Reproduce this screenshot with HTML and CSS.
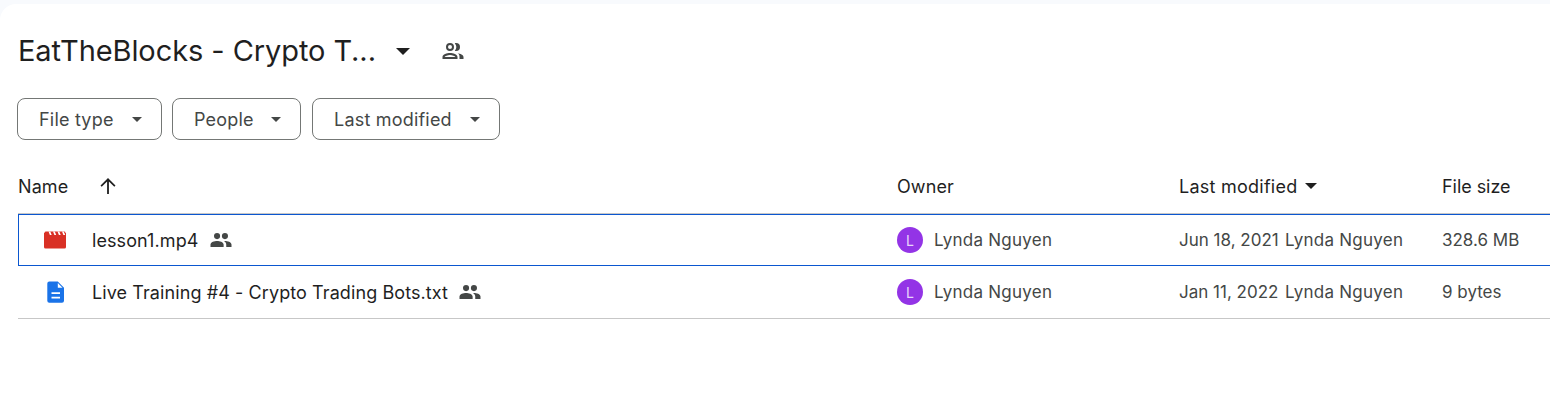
FILE: index.html
```html
<!DOCTYPE html>
<html lang="en">
<head>
<meta charset="utf-8">
<title>EatTheBlocks - Crypto Trading</title>
<link rel="stylesheet" href="styles.css">
</head>
<body>
<main class="card">
  <header class="title-row">
    <h1 class="title">EatTheBlocks - Crypto T...</h1>
    <svg class="title-caret" viewBox="0 0 14 7"><path d="M0 0h14L7 7z"/></svg>
    <svg class="title-people" viewBox="0 0 24 24"><path d="M9 12a4 4 0 1 0 0-8 4 4 0 0 0 0 8zm0-6a2 2 0 1 1 0 4 2 2 0 0 1 0-4zm0 8c-3 0-7.500 1.300-7.500 4v2h15v-2c0-2.700-4.500-4-7.500-4zM3.600 18c.5-.9 3-2 5.400-2s4.900 1.100 5.400 2H3.600zM15 12a4 4 0 0 0 0-8c-.4 0-.8.100-1.200.2a6 6 0 0 1 0 7.600c.4.100.8.200 1.200.2zm1.700 2.300c1.700.9 1.800 2.200 1.800 3.700v2h4v-2c0-2.200-3.300-3.300-5.800-3.700z"/></svg>
  </header>

  <div class="chips">
    <button class="chip chip-type">File type<svg class="chip-caret" viewBox="0 0 10 5"><path d="M0 0h10L5 5z"/></svg></button>
    <button class="chip chip-people">People<svg class="chip-caret" viewBox="0 0 10 5"><path d="M0 0h10L5 5z"/></svg></button>
    <button class="chip chip-mod">Last modified<svg class="chip-caret" viewBox="0 0 10 5"><path d="M0 0h10L5 5z"/></svg></button>
  </div>

  <section class="table">
    <div class="row head">
      <div class="c-name"><span>Name</span>
        <svg class="sort-arrow" viewBox="0 0 16 16"><path d="M8 0 .5 7.500l1.200 1.200L7.100 3.400V16h1.800V3.400l5.400 5.300 1.200-1.200z"/></svg>
      </div>
      <div class="c-owner">Owner</div>
      <div class="c-mod"><span class="head-mod">Last modified</span><svg class="head-caret" viewBox="0 0 10 5"><path d="M0 0h10L5 5z"/></svg></div>
      <div class="c-size head-size">File size</div>
    </div>

    <div class="row item selected">
      <div class="c-name">
        <span class="file-icon"><svg viewBox="0 0 22 18" width="22" height="18"><path fill="#d93025" d="M1.500.5h19A1.500 1.500 0 0 1 22 2v14a1.500 1.500 0 0 1-1.500 1.500h-19A1.500 1.500 0 0 1 0 16V2A1.500 1.500 0 0 1 1.500.5z"/><path fill="#fff" d="M0 .5h1.500L0 2zM20.500.5H22V2zM4.500.5h1.800l1.400 3.400H5.900zM9 .5h1.800l1.400 3.400h-1.800zM13.500.5h1.800l1.400 3.400h-1.800zM18 .5h1.800l1.400 3.400h-1.800z"/></svg></span>
        <span class="fname">lesson1.mp4</span>
        <svg class="shared" viewBox="0 0 24 16"><use href="#shared-glyph"/></svg>
      </div>
      <div class="c-owner"><span class="avatar">L</span><span class="person">Lynda Nguyen</span></div>
      <div class="c-mod"><span class="date">Jun 18, 2021</span><span class="person">Lynda Nguyen</span></div>
      <div class="c-size">328.6 MB</div>
    </div>

    <div class="row item">
      <div class="c-name">
        <span class="file-icon"><svg viewBox="0 0 18 22" width="18" height="22"><path fill="#1a73e8" d="M2.300.5h8.500L17 6.700v13a2 2 0 0 1-2 2H2.300a2 2 0 0 1-2-2v-17.200a2 2 0 0 1 2-2z"/><path fill="#fff" d="M10.800 2 15.500 6.700h-4.700z"/><path fill="#fff" d="M4.500 11.200H13v1.800H4.500zM4.500 15.700H13v1.800H4.500z"/></svg></span>
        <span class="fname">Live Training #4 - Crypto Trading Bots.txt</span>
        <svg class="shared" viewBox="0 0 24 16"><use href="#shared-glyph"/></svg>
      </div>
      <div class="c-owner"><span class="avatar">L</span><span class="person">Lynda Nguyen</span></div>
      <div class="c-mod"><span class="date">Jan 11, 2022</span><span class="person">Lynda Nguyen</span></div>
      <div class="c-size">9 bytes</div>
    </div>
  </section>
</main>
<svg class="defs" aria-hidden="true"><defs><path id="shared-glyph" d="M16.500 7a3.500 3.500 0 1 0 0-7 3.500 3.500 0 0 0 0 7zm-9 0a3.500 3.500 0 1 0 0-7 3.500 3.500 0 0 0 0 7zm0 2C4.700 9 0 10.300 0 13v3h15v-3c0-2.700-4.700-4-7.500-4zm9 0h-1.100c1.500 1 2.600 2.300 2.600 4v3h6v-3c0-2.700-4.700-4-7.500-4z"/></defs></svg>
</body>
</html>
```
FILE: styles.css
```css
* { box-sizing: border-box; }
html, body { margin: 0; height: 100%; }
body {
  background: #f8fafd;
  padding-top: 4px;
  overflow: hidden;
  font-family: "Inter", "Open Sans", sans-serif;
  color: #1f1f1f;
}
.card {
  background: #fff;
  height: 411px;
  border-top-left-radius: 16px;
  padding: 0 0 0 18px;
}
.title-row {
  display: flex;
  align-items: center;
  padding-top: 32px;
  box-sizing: content-box;
  height: 30px;
}
.title {
  margin: 0;
  font-size: 29px;
  font-weight: 400;
  line-height: 30px;
  letter-spacing: -.08px;
  width: 376px;
  white-space: nowrap;
}
.title-caret { width: 14px; height: 7px; margin-left: 2px; fill: #1f1f1f; }
.title-people { width: 24px; height: 24px; margin-left: 31px; fill: #444746; }
.chips { display: flex; margin-top: 32px; margin-left: -1px; }
.chip {
  display: flex;
  align-items: center;
  justify-content: space-between;
  height: 42px;
  padding: 0 19px 0 21px;
  background: #fff;
  border: 1px solid #747775;
  border-radius: 8px;
  font: 400 18px "Inter", sans-serif;
  letter-spacing: .2px;
  color: #444746;
}
.chip-type { width: 145px; margin-right: 10px; }
.chip-people { width: 129px; margin-right: 11px; }
.chip-mod { width: 188px; }
.chip-caret { width: 10px; height: 5px; fill: #444746; }
.table { margin-top: 19px; }
.row { display: grid; grid-template-columns: 879px 282px 263px 1fr; align-items: center; }
.head {
  height: 55px;
  border-bottom: 1px solid #c7c7c7;
  font-size: 18px;
  letter-spacing: .1px;
  color: #1f1f1f;
}
.head > div { display: flex; align-items: center; }
.head-mod { letter-spacing: .25px; }
.head-size { letter-spacing: -.05px; }
.sort-arrow { width: 16px; height: 16px; margin-left: 32px; fill: #1f1f1f; }
.head-caret { width: 12px; height: 6px; margin-left: 8px; fill: #1f1f1f; }
.item {
  height: 53px;
  border-bottom: 1px solid #c7c7c7;
  font-size: 17px;
  color: #444746;
}
.item > div { display: flex; align-items: center; white-space: nowrap; }
.selected {
  height: 52px;
  border: 1px solid #0b57d0;
  border-right: 0;
  grid-template-columns: 878px 282px 263px 1fr;
}
.file-icon { width: 74px; padding-left: 29px; display: flex; align-items: center; }
.selected .file-icon { width: 73px; padding-left: 25px; }
.fname { color: #1f1f1f; font-size: 18px; letter-spacing: .09px; }
.person { letter-spacing: .25px; }
.shared { width: 22px; height: 14px; margin-left: 11px; fill: #444746; }
.avatar {
  width: 26px; height: 26px; border-radius: 50%;
  background: #9334e6; color: #e8d5fb;
  display: flex; align-items: center; justify-content: center;
  font-size: 14px; margin-right: 11px;
}
.date { width: 106px; }
.defs { position: absolute; width: 0; height: 0; }
```
